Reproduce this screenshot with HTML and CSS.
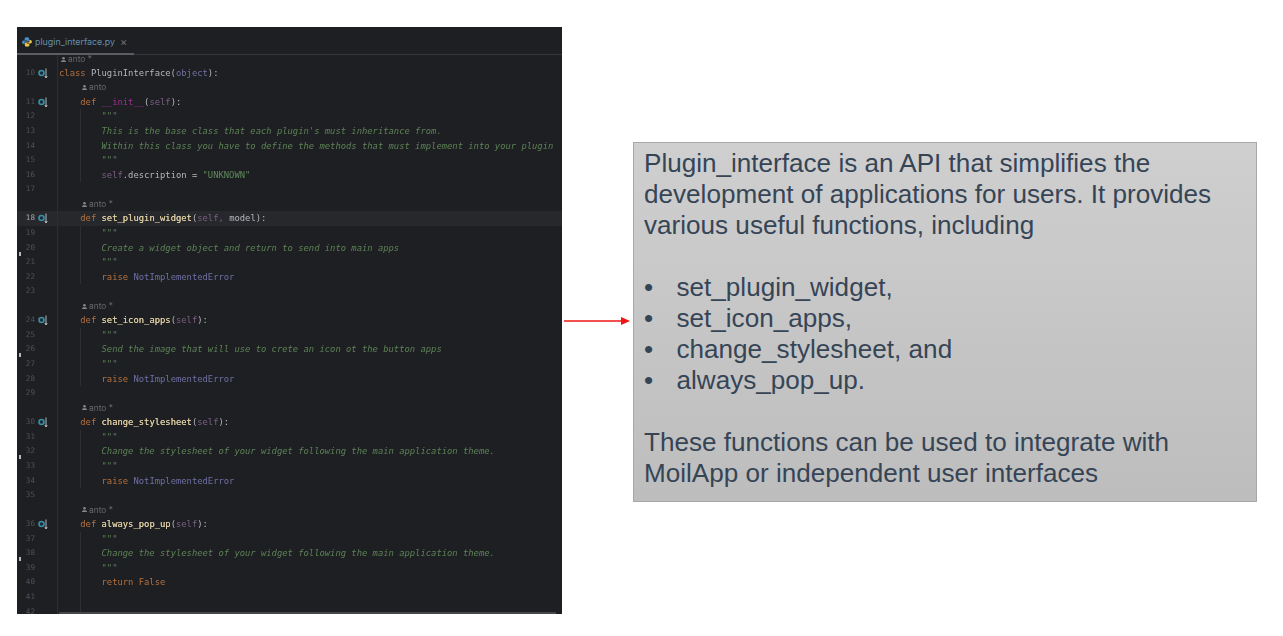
FILE: index.html
```html
<!DOCTYPE html>
<html lang="en">
<head>
<meta charset="utf-8">
<title>Plugin interface</title>
<link rel="stylesheet" href="styles.css">
</head>
<body>
<svg class="defs" width="0" height="0" aria-hidden="true">
  <symbol id="impl" viewBox="0 0 11 11">
    <circle cx="3.500" cy="5" r="2.500" fill="#1e2a33" stroke="#3a8ea8" stroke-width="1.600"/>
    <path d="M8 .5V9.500M6.800 8 8 10 9.200 8" fill="none" stroke="#c5cace" stroke-width=".9"/>
  </symbol>
  <symbol id="user" viewBox="0 0 7 7">
    <circle cx="3.500" cy="2.300" r="1.300" fill="#85888c"/>
    <path d="M1 6C1 4.700 2.200 4.300 3.500 4.300S6 4.700 6 6Z" fill="#85888c"/>
  </symbol>
</svg>
<main class="page">
  <section class="editor">
    <header class="tabs">
      <div class="tab">
        <svg class="py" viewBox="0 0 10 10" aria-hidden="true">
          <path d="M5 .2C3.100.2 2.600.9 2.600 1.900v1.100h2.500v.5H1.700C.7 3.500.1 4.200.1 5.200s.6 1.900 1.500 1.900h1V5.800c0-.8.6-1.400 1.400-1.400h2c.7 0 1.200-.5 1.200-1.200V1.900C7.200.9 6.700.2 5 .2Z" fill="#4c8cbf"/>
          <path d="M5 9.800c1.900 0 2.400-.7 2.400-1.700V7H4.900v-.5h3.400c1 0 1.600-.7 1.600-1.700S9.300 2.900 8.400 2.900h-1v1.300c0 .8-.6 1.400-1.400 1.400H4c-.7 0-1.200.5-1.200 1.200v1.300c0 1 .5 1.700 2.200 1.700Z" fill="#e8c44a"/>
        </svg>
        <span class="tab-name">plugin_interface.py</span>
        <span class="tab-close">×</span>
      </div>
    </header>
    <div class="code-area">
      <div class="lines">
        <div class="row first"><span class="gut"></span><span class="code author top"><svg class="uicon"><use href="#user"/></svg>anto *</span></div>
        <div class="row"><span class="gut"><span class="num">10</span><svg class="impl"><use href="#impl"/></svg></span><span class="code"><span class="k">class</span> PluginInterface(<span class="b">object</span>):</span></div>
        <div class="row"><span class="gut"></span><span class="code author"><svg class="uicon"><use href="#user"/></svg>anto</span></div>
        <div class="row"><span class="gut"><span class="num">11</span><svg class="impl"><use href="#impl"/></svg></span><span class="code">    <span class="k">def</span> <span class="m">__init__</span>(<span class="s">self</span>):</span></div>
        <div class="row"><span class="gut"><span class="num">12</span></span><span class="code guide">        <span class="d">"""</span></span></div>
        <div class="row"><span class="gut"><span class="num">13</span></span><span class="code guide">        <span class="d">This is the base class that each plugin's must inheritance from.</span></span></div>
        <div class="row"><span class="gut"><span class="num">14</span></span><span class="code guide">        <span class="d">Within this class you have to define the methods that must implement into your plugin</span></span></div>
        <div class="row"><span class="gut"><span class="num">15</span></span><span class="code guide">        <span class="d">"""</span></span></div>
        <div class="row"><span class="gut"><span class="num">16</span></span><span class="code guide">        <span class="s">self</span>.description = <span class="t">"UNKNOWN"</span></span></div>
        <div class="row"><span class="gut"><span class="num">17</span></span><span class="code"></span></div>

        <div class="row"><span class="gut"></span><span class="code author"><svg class="uicon"><use href="#user"/></svg>anto *</span></div>
        <div class="row active"><span class="gut"><span class="num">18</span><svg class="impl"><use href="#impl"/></svg></span><span class="code">    <span class="k">def</span> <span class="f">set_plugin_widget</span>(<span class="s">self,</span> model):</span></div>
        <div class="row"><span class="gut"><span class="num">19</span></span><span class="code guide">        <span class="d">"""</span></span></div>
        <div class="row"><span class="gut"><span class="num">20</span></span><span class="code guide">        <span class="d">Create a widget object and return to send into main apps</span></span><i class="mark"></i></div>
        <div class="row"><span class="gut"><span class="num">21</span></span><span class="code guide">        <span class="d">"""</span></span></div>
        <div class="row"><span class="gut"><span class="num">22</span></span><span class="code guide">        <span class="k">raise</span> <span class="b">NotImplementedError</span></span></div>
        <div class="row"><span class="gut"><span class="num">23</span></span><span class="code"></span></div>

        <div class="row"><span class="gut"></span><span class="code author"><svg class="uicon"><use href="#user"/></svg>anto *</span></div>
        <div class="row"><span class="gut"><span class="num">24</span><svg class="impl"><use href="#impl"/></svg></span><span class="code">    <span class="k">def</span> <span class="f">set_icon_apps</span>(<span class="s">self</span>):</span></div>
        <div class="row"><span class="gut"><span class="num">25</span></span><span class="code guide">        <span class="d">"""</span></span></div>
        <div class="row"><span class="gut"><span class="num">26</span></span><span class="code guide">        <span class="d">Send the image that will use to crete an icon ot the button apps</span></span><i class="mark"></i></div>
        <div class="row"><span class="gut"><span class="num">27</span></span><span class="code guide">        <span class="d">"""</span></span></div>
        <div class="row"><span class="gut"><span class="num">28</span></span><span class="code guide">        <span class="k">raise</span> <span class="b">NotImplementedError</span></span></div>
        <div class="row"><span class="gut"><span class="num">29</span></span><span class="code"></span></div>

        <div class="row"><span class="gut"></span><span class="code author"><svg class="uicon"><use href="#user"/></svg>anto *</span></div>
        <div class="row"><span class="gut"><span class="num">30</span><svg class="impl"><use href="#impl"/></svg></span><span class="code">    <span class="k">def</span> <span class="f">change_stylesheet</span>(<span class="s">self</span>):</span></div>
        <div class="row"><span class="gut"><span class="num">31</span></span><span class="code guide">        <span class="d">"""</span></span></div>
        <div class="row"><span class="gut"><span class="num">32</span></span><span class="code guide">        <span class="d">Change the stylesheet of your widget following the main application theme.</span></span><i class="mark"></i></div>
        <div class="row"><span class="gut"><span class="num">33</span></span><span class="code guide">        <span class="d">"""</span></span></div>
        <div class="row"><span class="gut"><span class="num">34</span></span><span class="code guide">        <span class="k">raise</span> <span class="b">NotImplementedError</span></span></div>
        <div class="row"><span class="gut"><span class="num">35</span></span><span class="code"></span></div>

        <div class="row"><span class="gut"></span><span class="code author"><svg class="uicon"><use href="#user"/></svg>anto *</span></div>
        <div class="row"><span class="gut"><span class="num">36</span><svg class="impl"><use href="#impl"/></svg></span><span class="code">    <span class="k">def</span> <span class="f">always_pop_up</span>(<span class="s">self</span>):</span></div>
        <div class="row"><span class="gut"><span class="num">37</span></span><span class="code guide">        <span class="d">"""</span></span></div>
        <div class="row"><span class="gut"><span class="num">38</span></span><span class="code guide">        <span class="d">Change the stylesheet of your widget following the main application theme.</span></span><i class="mark"></i></div>
        <div class="row"><span class="gut"><span class="num">39</span></span><span class="code guide">        <span class="d">"""</span></span></div>
        <div class="row"><span class="gut"><span class="num">40</span></span><span class="code guide">        <span class="k">return False</span></span></div>
        <div class="row"><span class="gut"><span class="num">41</span></span><span class="code guide"></span></div>
        <div class="row"><span class="gut"><span class="num">42</span></span><span class="code guide"></span></div>
      </div>
      <div class="hscroll"></div>
    </div>
  </section>

  <div class="connector">
    <svg class="arrow" viewBox="0 0 68 10" aria-hidden="true">
      <path d="M0 5H58" stroke="#f01616" stroke-width="1.300"/>
      <path d="M57 1 66 5 57 9Z" fill="#f01616"/>
    </svg>
  </div>

  <aside class="note">
    <p>Plugin_interface is an API that simplifies the development of applications for users. It provides various useful functions, including</p>
    <ul>
      <li>set_plugin_widget,</li>
      <li>set_icon_apps,</li>
      <li>change_stylesheet, and</li>
      <li>always_pop_up.</li>
    </ul>
    <p>These functions can be used to integrate with MoilApp or independent user interfaces</p>
  </aside>
</main>
</body>
</html>
```
FILE: styles.css
```css
* { box-sizing: border-box; }
html, body { margin: 0; height: 100%; background: #fff; }
body { overflow: hidden; }
.defs { position: absolute; }
.page { display: flex; align-items: flex-start; padding: 27px 0 0 17px; }

.editor {
  width: 545px; height: 587px; flex: none;
  background: #1e1f22; display: flex; flex-direction: column; overflow: hidden;
}
.tabs { height: 28px; flex: none; border-bottom: 1px solid #35373b; display: flex; }
.tab {
  width: 117px; height: 28px; display: flex; align-items: center; gap: 3px;
  padding: 3px 0 0 5px; border-bottom: 2px solid #5a5d63;
  font: 8.9px/12px Inter, sans-serif;
}
.py { width: 10px; height: 10px; flex: none; }
.tab-name { color: #6490ad; }
.tab-close { color: #6f7276; margin-left: 2px; font-size: 11px; }

.code-area { position: relative; flex: 1; overflow: hidden; }
.lines { filter: blur(.3px); }
.row {
  position: relative; display: flex; height: 14.57px;
  font: 8.84px/14.57px "DejaVu Sans Mono", monospace; color: #b4b7bb;
}
.first { height: 10.77px; }
.gut {
  width: 41px; flex: none; display: flex; align-items: center;
  border-right: 1px solid #2c2e32; padding-left: 7px;
}
.num { width: 11px; text-align: right; color: #4d5157; font-size: 7.6px; }
.impl { width: 11px; height: 11px; margin-left: 3px; flex: none; }
.code {
  flex: 1; padding-left: 1px; white-space: pre;
}
.guide {
  background: linear-gradient(#2d2f33, #2d2f33) 22px 0 / 1px 100% no-repeat;
}
.author {
  display: flex; align-items: center; padding-left: 23px; color: #65686d;
  font: 8.4px/14.57px Inter, sans-serif;
}
.author.top { padding-left: 2px; height: 8px; line-height: 8px; }
.uicon { width: 7px; height: 7px; margin-right: 1px; flex: none; }
.active { background: #26282c; }
.active .num { color: #a3a6aa; }
.mark {
  position: absolute; left: 2px; top: 11px; width: 2px; height: 4px; background: #b5bbc0;
}
.k { color: #b5713f; }
.f { color: #dccca2; text-shadow: 0 0 .6px #dccca2; }
.m { color: #a32c9f; }
.s { color: #7d5f85; }
.b { color: #6f6fa6; }
.d { color: #5c8256; font-style: italic; }
.t { color: #5f8a5a; }
.hscroll {
  position: absolute; left: 42px; right: 6px; bottom: 0; height: 2px; background: #45474a;
}

.connector { width: 71px; flex: none; padding: 289px 0 0 2px; }
.arrow { display: block; width: 68px; height: 10px; }

.note {
  width: 624px; height: 360px; flex: none; margin-top: 115px;
  border: 1px solid #a8a8a8;
  background: linear-gradient(#cfcfcf, #bdbdbd);
  padding: 5px 10px 0;
  font: 26.1px/31px "Liberation Sans", sans-serif; color: #364556;
}
.note p { margin: 0; }
.note ul { list-style: none; margin: 31px 0; padding: 0; }
.note li { display: flex; }
.note li::before { content: "•"; width: 32.500px; flex: none; }
```
